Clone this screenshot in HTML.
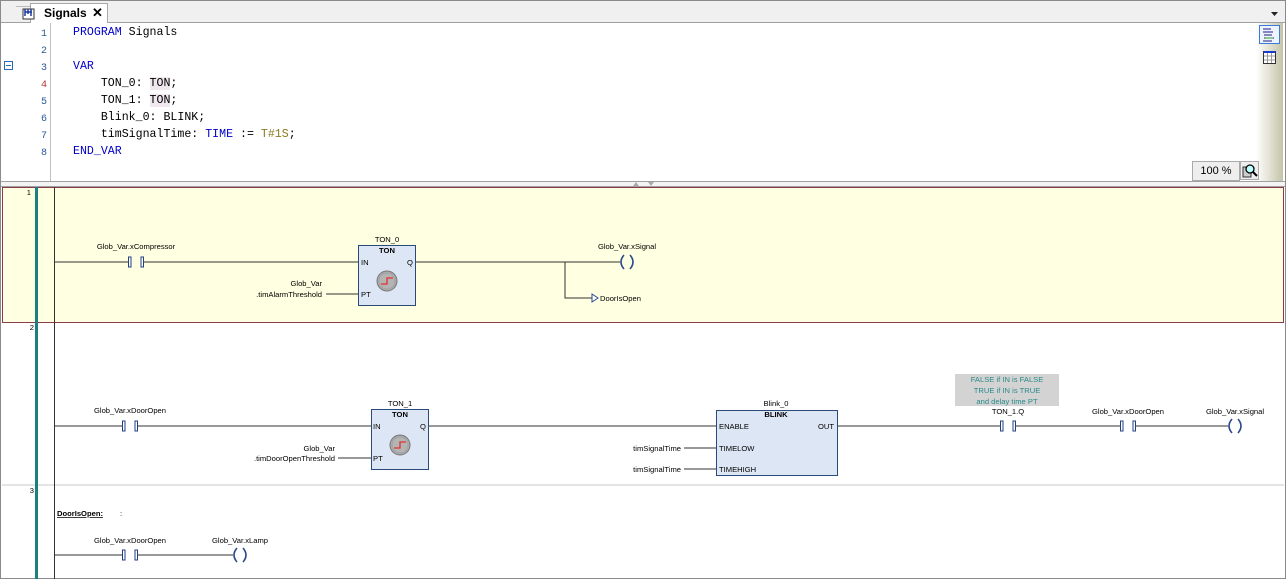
<!DOCTYPE html>
<html><head><meta charset="utf-8"><style>
body{margin:0;width:1286px;height:579px;overflow:hidden;background:#fff;font-family:"Liberation Sans",sans-serif;position:relative}
.a{position:absolute}
.code{font-family:"Liberation Mono",monospace;font-size:11.6px;white-space:pre;color:#000}
.ln{font-family:"Liberation Mono",monospace;font-size:10px;color:#2a5a9a;text-align:right;width:14px}
.kw{color:#0000c8}
</style></head><body>
<div class="a" style="left:0;top:0;width:1284px;height:577px;border:1px solid #8a8a8a"></div>
<div class="a" style="left:1px;top:1px;width:1284px;height:21px;background:#f0f0f0;border-bottom:1px solid #a0a0a0"></div>
<div class="a" style="left:8px;top:6px;width:22px;height:16px;border-top:1px solid #bbb;transform:skewX(-45deg)"></div>
<div class="a" style="left:30px;top:3px;width:76px;height:19px;background:#fff;border:1px solid #a8a8a8;border-bottom:none"></div>
<svg class="a" style="left:22px;top:7px" width="14" height="13"><rect x="1" y="2" width="11" height="10" fill="#fff" stroke="#333"/><path d="M3 2V9M6 2V7M9 2V9M3 5H10" stroke="#1a3aa0" stroke-width="1.5"/></svg>
<div class="a" style="left:44px;top:6px;font-size:12px;font-weight:bold">Signals</div>
<div class="a" style="left:92px;top:5px;font-size:13px;font-weight:bold">✕</div>
<svg class="a" style="left:1270px;top:11px" width="10" height="6"><path d="M1 1H8L4.5 5Z" fill="#222"/></svg>
<div class="a" style="left:50px;top:23px;width:1px;height:158px;background:#c0c0c0"></div>
<div class="a ln" style="left:33px;top:26px;line-height:17px">1<br>2<br>3<br><span style="color:#b03030">4</span><br>5<br>6<br>7<br>8</div>
<svg class="a" style="left:4px;top:61px" width="10" height="10"><rect x="0.5" y="0.5" width="8" height="8" fill="#fff" stroke="#2a6ab0"/><path d="M2 4.5H7" stroke="#2a6ab0"/></svg>
<div class="a code" style="left:73px;top:24px;line-height:17px"><span class="kw">PROGRAM</span> Signals

<span class="kw">VAR</span>
    TON_0: <span style="background:#efe8ef">TON</span>;
    TON_1: <span style="background:#efe8ef">TON</span>;
    Blink_0: BLINK;
    timSignalTime: <span class="kw">TIME</span> := <span style="color:#8a7a20">T#1S</span>;
<span class="kw">END_VAR</span></div>
<div class="a" style="left:1256px;top:23px;width:27px;height:158px;background:linear-gradient(to right,#fff,#c4c4a8)"></div>
<svg class="a" style="left:1259px;top:25px" width="22" height="42"><rect x="0.5" y="0.5" width="20" height="18" fill="#eef4ff" stroke="#3a7ad8"/><path d="M4 4h8M4 7h10M5 10h8M5 13h10M4 16h9" stroke="#1a1a80"/><path d="M6 13h8" stroke="#2a9a2a"/><rect x="4.5" y="26.5" width="12" height="12" fill="#fff" stroke="#333"/><path d="M4.5 27h12" stroke="#1a3ad0" stroke-width="2"/><path d="M8.5 28v10M12.5 28v10M5 31h11M5 35h11" stroke="#999"/></svg>
<div class="a" style="left:1192px;top:161px;width:46px;height:18px;background:#eee;border:1px solid #aaa;font-size:11px;text-align:center;line-height:18px">100 %</div>
<svg class="a" style="left:1240px;top:161px" width="20" height="19"><rect x="0.5" y="0.5" width="18" height="18" fill="#eee" stroke="#aaa"/><rect x="3" y="6" width="8" height="10" fill="#ccc" stroke="#333"/><circle cx="10" cy="8" r="4" fill="#bff" stroke="#000" stroke-width="1.3"/><path d="M13 11l4 4" stroke="#000" stroke-width="2"/></svg>
<div class="a" style="left:1px;top:181px;width:1284px;height:1px;background:#a0a0a0"></div>
<div class="a" style="left:1px;top:182px;width:1284px;height:4px;background:#f4f4f4;border-bottom:1px solid #a0a0a0"></div>
<svg class="a" style="left:630px;top:181px" width="30" height="6"><path d="M3 5l3-4l3 4ZM18 1l3 4l3-4Z" fill="#aaa"/></svg>

<svg class="a" style="left:0;top:187px" width="1286" height="392" font-family="Liberation Sans,sans-serif" font-size="7.6">
<defs>
<g id="ct"><rect x="-7.5" y="-5" width="2.5" height="10" fill="#fff" stroke="#203f80"/><rect x="5" y="-5" width="2.5" height="10" fill="#fff" stroke="#203f80"/></g>
<g id="cl" fill="none" stroke="#2a4a8a" stroke-width="1.6"><path d="M-3-7Q-9 0-3 7"/><path d="M3-7Q9 0 3 7"/></g>
<g id="clk"><circle r="10" fill="#aaa" stroke="#777"/><circle r="8" fill="#b4b4b4" stroke="#999" stroke-width=".5"/><path d="M-6 3H0V-3H6" stroke="#e03030" fill="none" stroke-width="1.3"/></g>
</defs>
<rect x="2.5" y="0.5" width="1281" height="135" fill="#ffffe1" stroke="#8b3a4a"/>
<line x1="2" y1="298" x2="1284" y2="298" stroke="#c8c8c8"/>
<rect x="35" y="0" width="3" height="392" fill="#1a8080"/>
<line x1="54.5" y1="0" x2="54.5" y2="392" stroke="#333"/>
<text x="31" y="8" text-anchor="end">1</text><text x="34" y="143" text-anchor="end">2</text><text x="34" y="306" text-anchor="end">3</text>
<g stroke="#333" stroke-width="1" fill="none">
<path d="M54 75H129M144 75H358M415 75H620M565 75V111H592M326 107H358"/>
<path d="M54 239H123M138 239H371M428 239H716M338 271H371M837 239H1001M1016 239H1121M1136 239H1228M684 261H716M684 282H716"/>
<path d="M54 368H123M138 368H233"/>
</g>
<use href="#ct" x="136" y="75"/><use href="#cl" x="627" y="75"/>
<path d="M592 107V115L598 111Z" fill="#fff" stroke="#2a4a8a"/>
<text x="136" y="62" text-anchor="middle">Glob_Var.xCompressor</text>
<text x="627" y="62" text-anchor="middle">Glob_Var.xSignal</text>
<text x="600" y="114">DoorIsOpen</text>
<rect x="358.5" y="58.5" width="57" height="60" fill="#dde6f4" stroke="#2a4a7a"/>
<text x="387" y="55" text-anchor="middle">TON_0</text><text x="387" y="66" text-anchor="middle" font-weight="bold">TON</text>
<text x="361" y="78">IN</text><text x="407" y="78">Q</text><text x="361" y="110">PT</text>
<use href="#clk" x="387" y="94"/>
<text x="322" y="99" text-anchor="end">Glob_Var</text><text x="322" y="110" text-anchor="end">.timAlarmThreshold</text>

<use href="#ct" x="130" y="239"/>
<text x="130" y="226" text-anchor="middle">Glob_Var.xDoorOpen</text>
<rect x="371.5" y="222.5" width="57" height="60" fill="#dde6f4" stroke="#2a4a7a"/>
<text x="400" y="219" text-anchor="middle">TON_1</text><text x="400" y="230" text-anchor="middle" font-weight="bold">TON</text>
<text x="373" y="242">IN</text><text x="420" y="242">Q</text><text x="373" y="274">PT</text>
<use href="#clk" x="400" y="258"/>
<text x="335" y="264" text-anchor="end">Glob_Var</text><text x="335" y="274" text-anchor="end">.timDoorOpenThreshold</text>
<rect x="716.5" y="223.5" width="121" height="65" fill="#dde6f4" stroke="#2a4a7a"/>
<text x="776" y="219" text-anchor="middle">Blink_0</text><text x="776" y="230" text-anchor="middle" font-weight="bold">BLINK</text>
<text x="719" y="242">ENABLE</text><text x="834" y="242" text-anchor="end">OUT</text>
<text x="719" y="264">TIMELOW</text><text x="719" y="285">TIMEHIGH</text>
<text x="681" y="264" text-anchor="end">timSignalTime</text><text x="681" y="285" text-anchor="end">timSignalTime</text>
<rect x="955" y="187" width="104" height="32" fill="#d3d3d3"/>
<g fill="#2a8a8a" text-anchor="middle"><text x="1007" y="195">FALSE if IN is FALSE</text><text x="1007" y="206">TRUE if IN is TRUE</text><text x="1007" y="217">and delay time PT</text></g>
<use href="#ct" x="1008" y="239"/><text x="1008" y="227" text-anchor="middle">TON_1.Q</text>
<use href="#ct" x="1128" y="239"/><text x="1128" y="227" text-anchor="middle">Glob_Var.xDoorOpen</text>
<use href="#cl" x="1235" y="239"/><text x="1235" y="227" text-anchor="middle">Glob_Var.xSignal</text>

<text x="57" y="329" font-weight="bold" text-decoration="underline">DoorIsOpen:</text><text x="120" y="329">:</text>
<use href="#ct" x="130" y="368"/><text x="130" y="356" text-anchor="middle">Glob_Var.xDoorOpen</text>
<use href="#cl" x="240" y="368"/><text x="240" y="356" text-anchor="middle">Glob_Var.xLamp</text>
</svg>
</body></html>
